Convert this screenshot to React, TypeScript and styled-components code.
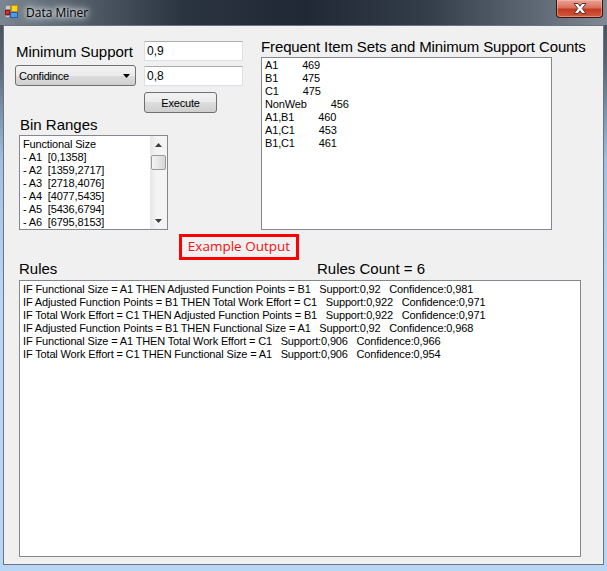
import React from "react";
import styled, { createGlobalStyle } from "styled-components";

const GlobalStyle = createGlobalStyle`
  html, body {
    margin: 0;
    padding: 0;
    background: #fff;
  }
  body {
    font-family: "Liberation Sans", Arial, sans-serif;
  }
`;

const binItems = [
  "Functional Size",
  "- A1  [0,1358]",
  "- A2  [1359,2717]",
  "- A3  [2718,4076]",
  "- A4  [4077,5435]",
  "- A5  [5436,6794]",
  "- A6  [6795,8153]",
];

const itemSets = [
  { name: "A1", count: 469 },
  { name: "B1", count: 475 },
  { name: "C1", count: 475 },
  { name: "NonWeb", count: 456 },
  { name: "A1,B1", count: 460 },
  { name: "A1,C1", count: 453 },
  { name: "B1,C1", count: 461 },
];

const rules = [
  "IF Functional Size = A1 THEN Adjusted Function Points = B1   Support:0,92   Confidence:0,981",
  "IF Adjusted Function Points = B1 THEN Total Work Effort = C1   Support:0,922   Confidence:0,971",
  "IF Total Work Effort = C1 THEN Adjusted Function Points = B1   Support:0,922   Confidence:0,971",
  "IF Adjusted Function Points = B1 THEN Functional Size = A1   Support:0,92   Confidence:0,968",
  "IF Functional Size = A1 THEN Total Work Effort = C1   Support:0,906   Confidence:0,966",
  "IF Total Work Effort = C1 THEN Functional Size = A1   Support:0,906   Confidence:0,954",
];

const Window = styled.div`
  width: 607px;
  height: 571px;
  display: flex;
  flex-direction: column;
  overflow: hidden;
  background: linear-gradient(180deg, #3e4853 0px, #56626e 60px, #9fc0e2 160px, #b9d7f5 300px);
`;

const TitleBar = styled.div`
  height: 25px;
  flex: none;
  display: flex;
  align-items: flex-start;
  background: linear-gradient(
    90deg,
    #7a8692 0%,
    #56616d 12%,
    #2b3541 30%,
    #1f2834 50%,
    #333d49 70%,
    #5d6874 88%,
    #808a94 100%
  );
`;

const AppIcon = styled.svg`
  margin: 5px 0 0 5px;
  flex: none;
`;

const Title = styled.span`
  margin: 5px 0 0 8px;
  font-family: "Open Sans", "Liberation Sans", sans-serif;
  font-size: 12px;
  line-height: 15px;
  color: #000;
  text-shadow: 0 0 4px #fff, 0 0 8px #fff, 0 0 12px rgba(255, 255, 255, 0.9);
`;

const CloseButton = styled.div`
  margin: 0 4px 0 auto;
  width: 47px;
  height: 18px;
  box-sizing: border-box;
  border: 1px solid #3b1410;
  border-top: none;
  border-radius: 0 0 4px 4px;
  display: flex;
  align-items: center;
  justify-content: center;
  background: linear-gradient(180deg, #e9a595 0%, #d9705b 45%, #c23b22 55%, #d25a3e 100%);
  box-shadow: inset 0 0 0 1px rgba(255, 200, 190, 0.45);
`;

const Client = styled.div`
  flex: 1;
  min-height: 0;
  margin: 0 3px 6px 3px;
  box-sizing: border-box;
  border: 1px solid #6b7480;
  background: #f0f0f0;
  padding: 12px 22px 7px 11px;
  display: flex;
  flex-direction: column;
`;

const TopSection = styled.div`
  display: flex;
  gap: 18px;
`;

const LeftCol = styled.div`
  width: 228px;
  display: flex;
  flex-direction: column;
`;

const FieldGrid = styled.div`
  margin-top: 3px;
  display: grid;
  grid-template-columns: 129px 99px;
  grid-template-rows: 20px 21px 23px;
  row-gap: 4px;
  align-items: center;
`;

const FieldLabel = styled.span`
  font-size: 15px;
  line-height: 17px;
  margin-left: 1px;
  letter-spacing: -0.05px;
  color: #000;
`;

const TextBox = styled.div`
  box-sizing: border-box;
  height: 20px;
  background: #fff;
  border: 1px solid #dbdfe6;
  border-top-color: #abadb3;
  font-size: 12px;
  line-height: 17px;
  padding: 1px 2px;
  color: #000;
`;

const winButton = `
  box-sizing: border-box;
  height: 21px;
  border: 1px solid #707070;
  border-radius: 3px;
  background: linear-gradient(180deg, #f2f2f2 0%, #ebebeb 50%, #dddddd 50%, #cfcfcf 100%);
  font-size: 11px;
  letter-spacing: -0.2px;
  color: #000;
  display: flex;
  align-items: center;
`;

const ComboBox = styled.div`
  ${winButton}
  width: 121px;
  justify-content: space-between;
  padding: 0 5px 0 3px;
`;

const PushButton = styled.div`
  ${winButton}
  grid-column: 2;
  align-self: end;
  width: 73px;
  justify-content: center;
`;

const SectionLabel = styled.div`
  font-size: 15px;
  line-height: 17px;
  color: #000;
  white-space: nowrap;
  margin-left: 4px;
`;

const BinLabel = styled(SectionLabel)`
  margin-top: 3px;
  margin-left: 5px;
`;

const ListBox = styled.div`
  box-sizing: border-box;
  border: 1px solid #828790;
  background: #fff;
  display: flex;
  font-size: 11px;
  line-height: 13px;
  letter-spacing: -0.15px;
  color: #000;
`;

const BinBox = styled(ListBox)`
  width: 149px;
  height: 95px;
  margin: 2px 0 0 4px;
`;

const Items = styled.div<{ $top: number }>`
  flex: 1;
  min-width: 0;
  padding: ${(p) => p.$top}px 3px 0 3px;
  white-space: pre;
  overflow: hidden;
`;

const ScrollBar = styled.div`
  width: 17px;
  flex: none;
  display: flex;
  flex-direction: column;
  background: linear-gradient(90deg, #e6e6e6, #f4f4f4 40%, #f4f4f4);
`;

const ScrollArrow = styled.div`
  height: 17px;
  display: flex;
  align-items: center;
  justify-content: center;
`;

const ScrollTrack = styled.div`
  flex: 1;
  padding: 2px 1px 0 1px;
`;

const ScrollThumb = styled.div`
  height: 15px;
  box-sizing: border-box;
  border: 1px solid #9a9a9a;
  border-radius: 2px;
  background: linear-gradient(90deg, #f4f4f4 0%, #e6e6e6 50%, #d6d6d6 100%);
`;

const RightCol = styled.div`
  width: 291px;
  display: flex;
  flex-direction: column;
`;

const Heading = styled.div`
  font-size: 15px;
  line-height: 17px;
  letter-spacing: -0.12px;
  color: #000;
  white-space: nowrap;
`;

const FreqBox = styled(ListBox)`
  height: 173px;
  margin-top: 2px;
`;

const FreqRow = styled.div`
  display: flex;
`;

const FreqCount = styled.span<{ $gap: number }>`
  margin-left: ${(p) => p.$gap}px;
`;

const ExampleTag = styled.div`
  align-self: flex-start;
  margin: 4px 0 0 164px;
  width: 120px;
  height: 26px;
  box-sizing: border-box;
  border: 3px solid #ff0000;
  color: #f01010;
  font-family: "Open Sans", "Liberation Sans", sans-serif;
  font-size: 13.5px;
  line-height: 19px;
  text-align: center;
`;

const RulesHeader = styled.div`
  display: grid;
  grid-template-columns: 298px 1fr;
  margin-left: 4px;
  font-size: 15px;
  line-height: 17px;
  color: #000;
`;

const RulesBox = styled(ListBox)`
  flex: 1;
  margin: 3px 0 0 4px;
`;

const ScrollUp = () => (
  <svg width="7" height="4" viewBox="0 0 7 4">
    <path d="M3.5 0 L7 4 L0 4 Z" fill="#3c3c3c" />
  </svg>
);

const ScrollDown = () => (
  <svg width="7" height="4" viewBox="0 0 7 4">
    <path d="M0 0 L7 0 L3.5 4 Z" fill="#3c3c3c" />
  </svg>
);

export default function App() {
  return (
    <>
      <GlobalStyle />
      <Window>
        <TitleBar>
          <AppIcon width="13" height="13" viewBox="0 0 13 13">
            <rect x="0.5" y="0.5" width="5" height="4" fill="#c8c8c8" stroke="#8a8a8a" />
            <rect x="6.5" y="0.5" width="6" height="6" fill="#ffd41c" stroke="#c88a00" />
            <rect x="0.5" y="5.5" width="4" height="4" fill="#e42a1e" stroke="#8a1410" />
            <rect x="5.5" y="7.5" width="7" height="5" fill="#4a9ae8" stroke="#1f5fb0" />
            <rect x="0.5" y="10.5" width="4" height="2" fill="#c8c8c8" stroke="#8a8a8a" />
          </AppIcon>
          <Title>Data Miner</Title>
          <CloseButton>
            <svg width="14" height="11" viewBox="0 0 14 11">
              <path
                d="M1 0.5 L5 0.5 L7 3.3 L9 0.5 L13 0.5 L9.2 5.5 L13 10.5 L9 10.5 L7 7.7 L5 10.5 L1 10.5 L4.8 5.5 Z"
                fill="#fff"
                stroke="#4a2a26"
                strokeWidth="0.9"
              />
            </svg>
          </CloseButton>
        </TitleBar>
        <Client>
          <TopSection>
            <LeftCol>
              <FieldGrid>
                <FieldLabel>Minimum Support</FieldLabel>
                <TextBox>0,9</TextBox>
                <ComboBox>
                  <span>Confidince</span>
                  <svg width="7" height="4" viewBox="0 0 7 4">
                    <path d="M0 0 L7 0 L3.5 4 Z" fill="#000" />
                  </svg>
                </ComboBox>
                <TextBox>0,8</TextBox>
                <PushButton>Execute</PushButton>
              </FieldGrid>
              <BinLabel>Bin Ranges</BinLabel>
              <BinBox>
                <Items $top={2}>
                  {binItems.map((b) => (
                    <div key={b}>{b}</div>
                  ))}
                </Items>
                <ScrollBar>
                  <ScrollArrow>
                    <ScrollUp />
                  </ScrollArrow>
                  <ScrollTrack>
                    <ScrollThumb />
                  </ScrollTrack>
                  <ScrollArrow>
                    <ScrollDown />
                  </ScrollArrow>
                </ScrollBar>
              </BinBox>
            </LeftCol>
            <RightCol>
              <Heading>Frequent Item Sets and Minimum Support Counts</Heading>
              <FreqBox>
                <Items $top={1}>
                  {itemSets.map((s) => (
                    <FreqRow key={s.name}>
                      <span>{s.name}</span>
                      <FreqCount $gap={24}>{s.count}</FreqCount>
                    </FreqRow>
                  ))}
                </Items>
              </FreqBox>
            </RightCol>
          </TopSection>
          <ExampleTag>Example Output</ExampleTag>
          <RulesHeader>
            <span>Rules</span>
            <span>Rules Count = 6</span>
          </RulesHeader>
          <RulesBox>
            <Items $top={2}>
              {rules.map((r, i) => (
                <div key={i}>{r}</div>
              ))}
            </Items>
          </RulesBox>
        </Client>
      </Window>
    </>
  );
}
